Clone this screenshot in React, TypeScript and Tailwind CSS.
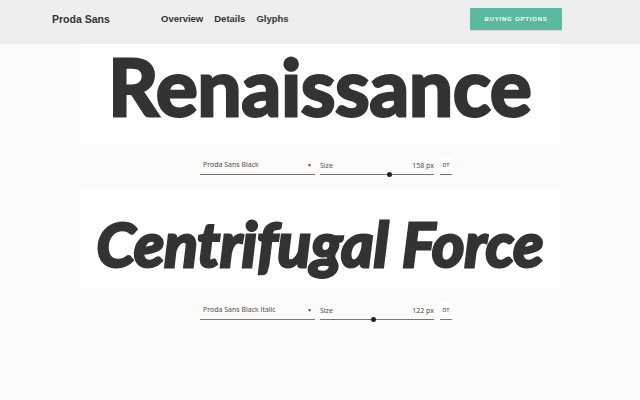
import React from 'react'

interface SpecimenProps {
  text: string
  styleName: string
  size: number
  thumb: number
  italic?: boolean
  textClass: string
}

function Specimen({ text, styleName, size, thumb, italic = false, textClass }: SpecimenProps) {
  return (
    <section>
      <div className="mx-auto w-[480px] h-[99px] bg-white flex items-center justify-center">
        <h1
          className={
            'font-bold text-[#333333] leading-none [-webkit-text-stroke:3px_#333333] ' +
            textClass +
            (italic ? ' italic' : '')
          }
          style={{ fontFamily: 'Lato, "Noto Sans", sans-serif' }}
        >
          {text}
        </h1>
      </div>
      <div className="flex items-end h-[32px] pl-[200px] gap-[5px] text-[7px] text-[#444]">
        <div className="w-[115px] h-[18px] border-b border-[#777] flex items-center justify-between px-[3px]">
          <span>{styleName}</span>
          <span className="text-[5px]">▼</span>
        </div>
        <div className="w-[114px] h-[18px] relative flex items-start pt-[4px] justify-between">
          <span>Size</span>
          <span>{size} px</span>
          <div className="absolute left-0 right-0 bottom-0 h-px bg-[#777]" />
          <div
            className="absolute bottom-[-2px] w-[5px] h-[5px] rounded-full bg-[#222]"
            style={{ left: thumb }}
          />
        </div>
        <div className="ml-px w-[12px] h-[18px] bg-white border-b border-[#777] flex items-center justify-center text-[5px] font-semibold">
          OT
        </div>
      </div>
    </section>
  )
}

export default function App() {
  return (
    <div
      className="w-[640px] h-[400px] bg-[#fcfbf9] overflow-hidden"
      style={{ fontFamily: '"Open Sans", "Noto Sans", sans-serif' }}
    >
      <header
        className="h-[44px] bg-[#eeeeee] flex items-start pt-[8px] pl-[52px] pr-[78px] text-[#333]"
        style={{ fontFamily: '"Liberation Sans", Arial, sans-serif' }}
      >
        <span className="text-[10.5px] font-bold w-[109px] leading-[22px]">Proda Sans</span>
        <nav className="flex gap-[11px] text-[9.5px] font-bold leading-[22px]">
          <a>Overview</a>
          <a>Details</a>
          <a>Glyphs</a>
        </nav>
        <button className="ml-auto w-[92px] h-[22px] bg-[#5bb9a0] text-white text-[6px] font-bold tracking-[0.8px] rounded-[1px] shadow-[0_1px_1px_rgba(0,0,0,0.1)]">
          BUYING OPTIONS
        </button>
      </header>
      <Specimen
        text="Renaissance"
        styleName="Proda Sans Black"
        size={158}
        thumb={67}
        textClass="text-[78px] mb-[15px]"
      />
      <div className="h-[14px]" />
      <Specimen
        text="Centrifugal Force"
        styleName="Proda Sans Black Italic"
        size={122}
        thumb={51}
        italic
        textClass="text-[62px] mt-[8px]"
      />
    </div>
  )
}
